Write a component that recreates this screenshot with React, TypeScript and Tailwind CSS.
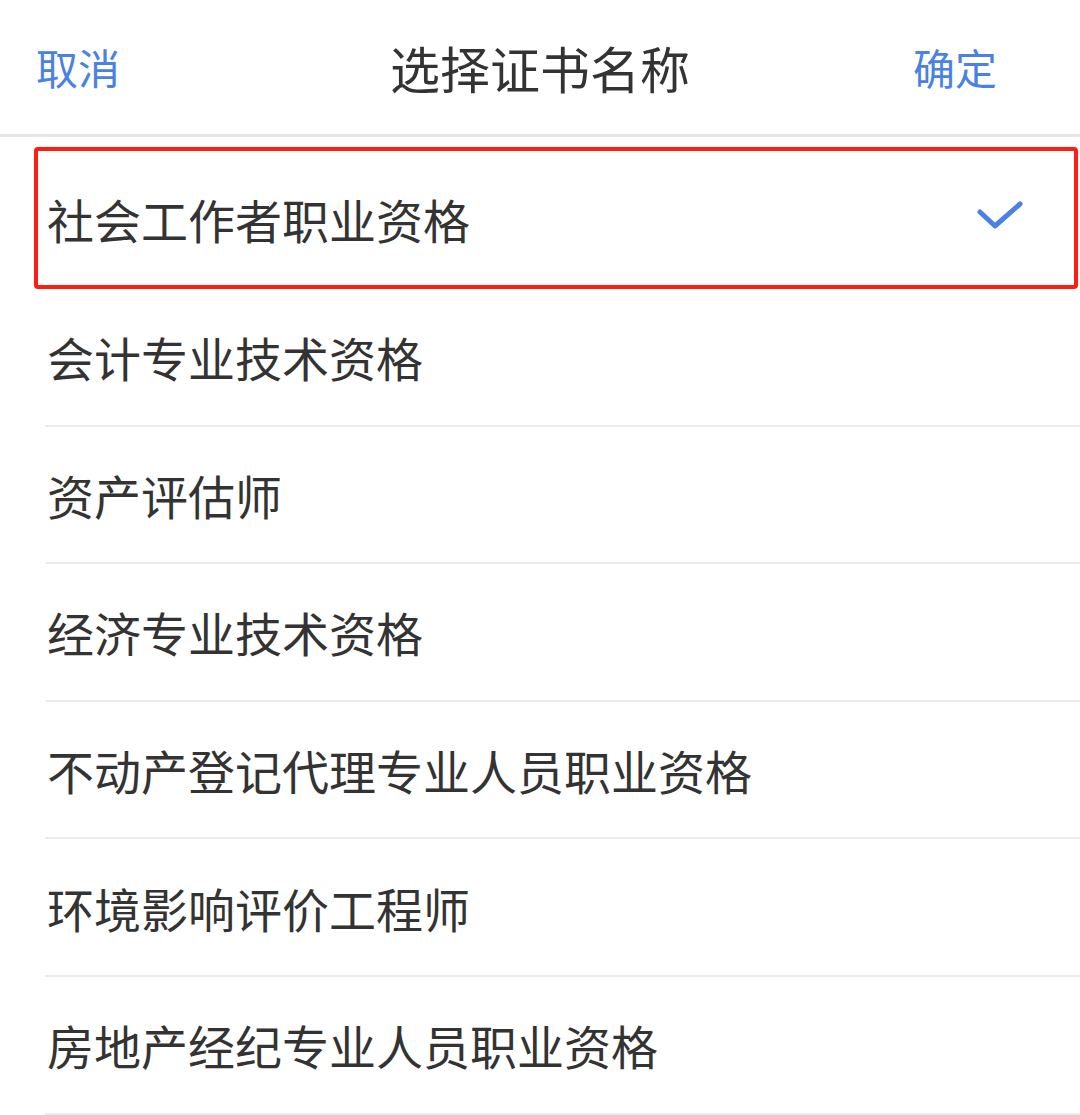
const FONT = '"Noto Sans CJK SC", "Noto Sans", sans-serif';

const items = [
  "会计专业技术资格",
  "资产评估师",
  "经济专业技术资格",
  "不动产登记代理专业人员职业资格",
  "环境影响评价工程师",
  "房地产经纪专业人员职业资格",
];

function Check() {
  return (
    <svg width="52" height="40" viewBox="0 0 52 40" fill="none">
      <path
        d="M6 14 L21 28 L46 6"
        stroke="#4a80e8"
        strokeWidth="5"
        strokeLinecap="round"
        strokeLinejoin="round"
      />
    </svg>
  );
}

export default function App() {
  return (
    <div
      className="min-h-[1115px] w-[1080px] overflow-hidden bg-white text-[#333333]"
      style={{ fontFamily: FONT }}
    >
      <div className="grid h-[137px] grid-cols-[1fr_auto_1fr] items-center border-b-[3px] border-[#e6e6e6] pl-[36px] pr-[83px]">
        <span className="justify-self-start text-[42px] leading-none text-[#4a82e4]">取消</span>
        <span className="text-[50px] leading-none text-[#333333] ml-[47px]">选择证书名称</span>
        <span className="justify-self-end text-[42px] leading-none text-[#4a82e4]">确定</span>
      </div>

      <div className="pt-[10px]">
        <div className="mx-[2px] ml-[34px] flex h-[142px] items-center justify-between rounded-[4px] border-4 border-[#ff1c10] pl-[9px] pr-[48px]">
          <span className="text-[47px] leading-none">社会工作者职业资格</span>
          <Check />
        </div>

        {items.map((label) => (
          <div
            key={label}
            className="ml-[45px] flex h-[137.6px] items-center border-b-2 border-[#ececec] pl-[2px]"
          >
            <span className="text-[47px] leading-none">{label}</span>
          </div>
        ))}
      </div>
    </div>
  );
}
